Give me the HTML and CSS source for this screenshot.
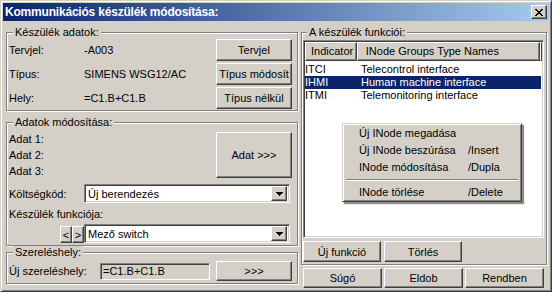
FILE: index.html
```html
<!DOCTYPE html>
<html lang="hu">
<head>
  <meta charset="UTF-8" />
  <title>Kommunikációs készülék módosítása</title>
  <link rel="stylesheet" href="styles.css">
</head>
<body>
  <div class="window">
    <!-- title bar -->
    <div class="titlebar">
      <span class="title">Kommunikációs készülék módosítása:</span>
      <button class="btn close" aria-label="Bezár">
        <svg width="8" height="7" viewBox="0 0 8 7"><path d="M0 0h2v1h-2zM6 0h2v1h-2zM1 1h2v1h-2zM5 1h2v1h-2zM2 2h4v1h-4zM3 3h2v1h-2zM2 4h4v1h-4zM1 5h2v1h-2zM5 5h2v1h-2zM0 6h2v1h-2zM6 6h2v1h-2z" fill="#000"/></svg>
      </button>
    </div>

    <div class="content">
      <!-- left side -->
      <div class="left">
        <fieldset class="group g-device">
          <legend>Készülék adatok:</legend>
          <div class="device-grid">
            <span>Tervjel:</span><span class="val">-A003</span><button class="btn">Tervjel</button>
            <span>Típus:</span><span class="val">SIMENS WSG12/AC</span><button class="btn">Típus módosít</button>
            <span>Hely:</span><span class="val">=C1.B+C1.B</span><button class="btn">Típus nélkül</button>
          </div>
        </fieldset>

        <fieldset class="group g-data">
          <legend>Adatok módosítása:</legend>
          <div class="data-top">
            <div class="adat-list">
              <div>Adat 1:</div>
              <div>Adat 2:</div>
              <div>Adat 3:</div>
            </div>
            <button class="btn btn-adat">Adat &gt;&gt;&gt;</button>
          </div>
          <div class="cost-row">
            <span>Költségkód:</span>
            <div class="combo">
              <span class="combo-text">Új berendezés</span>
              <span class="btn drop"><svg width="7" height="4" viewBox="0 0 7 4"><path d="M0 0h7v1h-1v1h-1v1h-1v1h-1v-1h-1v-1h-1v-1h-1z" fill="#000"/></svg></span>
            </div>
          </div>
          <div class="func-label">Készülék funkciója:</div>
          <div class="func-row">
            <div class="arrows">
              <button class="btn arrow">&lt;</button>
              <button class="btn arrow">&gt;</button>
            </div>
            <div class="combo">
              <span class="combo-text">Mező switch</span>
              <span class="btn drop"><svg width="7" height="4" viewBox="0 0 7 4"><path d="M0 0h7v1h-1v1h-1v1h-1v1h-1v-1h-1v-1h-1v-1h-1z" fill="#000"/></svg></span>
            </div>
          </div>
        </fieldset>

        <fieldset class="group g-place">
          <legend>Szereléshely:</legend>
          <div class="place-row">
            <span>Új szereléshely:</span>
            <div class="field">=C1.B+C1.B</div>
            <button class="btn">&gt;&gt;&gt;</button>
          </div>
        </fieldset>
      </div>

      <!-- right side -->
      <div class="right">
        <fieldset class="group g-func">
          <legend>A készülék funkciói:</legend>
          <div class="listview">
            <div class="lv-head">
              <div class="hcell c1">Indicator</div>
              <div class="hcell c2">INode Groups Type Names</div>
              <div class="hcell rest"></div>
            </div>
            <div class="lv-row"><span class="c1">ITCI</span><span class="c2">Telecontrol interface</span></div>
            <div class="lv-row selected"><span class="c1">IHMI</span><span class="c2">Human machine interface</span></div>
            <div class="lv-row"><span class="c1">ITMI</span><span class="c2">Telemonitoring interface</span></div>
          </div>
          <div class="func-buttons">
            <button class="btn">Új funkció</button>
            <button class="btn">Törlés</button>
          </div>
        </fieldset>
        <div class="dialog-buttons">
          <button class="btn">Súgó</button>
          <button class="btn">Eldob</button>
          <button class="btn">Rendben</button>
        </div>
      </div>
    </div>

    <!-- popup menu over the list -->
    <div class="context-menu">
      <div class="menu-item"><span class="m-label">Új INode megadása</span><span></span></div>
      <div class="menu-item"><span class="m-label">Új INode beszúrása</span><span>/Insert</span></div>
      <div class="menu-item"><span class="m-label">INode módosítása</span><span>/Dupla</span></div>
      <div class="menu-sep"></div>
      <div class="menu-item"><span class="m-label">INode törlése</span><span>/Delete</span></div>
    </div>
  </div>
</body>
</html>
```

FILE: styles.css
```css
* {
  box-sizing: border-box;
}

html, body {
  margin: 0;
  padding: 0;
}

body {
  width: 552px;
  height: 292px;
  overflow: hidden;
  font: 11px 'Liberation Sans', Arial, sans-serif;
  color: #000;
  background: #d4d0c8;
}

.window {
  position: relative;
  width: 552px;
  height: 292px;
  padding: 2px;
  background: #d4d0c8;
  border: 1px solid;
  border-color: #d4d0c8 #404040 #404040 #d4d0c8;
  box-shadow: inset 1px 1px #fff, inset -1px -1px #808080;
}

/* title bar */
.titlebar {
  height: 18px;
  display: flex;
  align-items: center;
  justify-content: space-between;
  padding: 0 2px;
  background: linear-gradient(to right, #0a246a, #a6caf0);
}

.title {
  color: #fff;
  font-weight: bold;
  font-size: 12px;
  letter-spacing: -0.2px;
}

/* classic raised button */
.btn {
  font: inherit;
  color: #000;
  margin: 0;
  padding: 0;
  background: #d4d0c8;
  border: 1px solid;
  border-color: #fff #404040 #404040 #fff;
  box-shadow: inset -1px -1px #808080;
  display: flex;
  align-items: center;
  justify-content: center;
}

.close {
  width: 16px;
  height: 14px;
}

.content {
  display: grid;
  grid-template-columns: 292px 246px;
  column-gap: 3px;
  padding: 5px 2px 0 3px;
}

/* etched group boxes */
.group {
  margin: 0;
  padding: 0 5px 1px 2px;
  min-width: 0;
  border: 1px solid #808080;
  box-shadow: inset 1px 1px #fff, 1px 1px #fff;
}

.group legend {
  padding: 0 2px;
  margin-left: 4px;
  line-height: 13px;
  background: #d4d0c8;
}

.left {
  display: flex;
  flex-direction: column;
}

.device-grid {
  display: grid;
  grid-template-columns: 75px 1fr 76px;
  grid-auto-rows: 22px;
  row-gap: 2px;
  align-items: center;
}

.device-grid .btn {
  height: 22px;
}

.g-data {
  margin-top: 5px;
  padding-bottom: 2px;
}

.data-top {
  display: flex;
  justify-content: space-between;
  padding-top: 2px;
}

.adat-list div {
  line-height: 16px;
}

.btn-adat {
  width: 76px;
  height: 46px;
  margin-top: 1px;
}

.cost-row {
  margin-top: 5px;
  display: grid;
  grid-template-columns: 75px 1fr;
  align-items: center;
}

/* combo box */
.combo {
  height: 19px;
  display: flex;
  align-items: center;
  justify-content: space-between;
  background: #fff;
  border: 1px solid;
  border-color: #808080 #fff #fff #808080;
  box-shadow: inset 1px 1px #404040, inset -1px -1px #d4d0c8;
  padding: 2px 2px 2px 3px;
  margin-right: 2px;
}

.drop {
  width: 16px;
  height: 15px;
}

.func-label {
  margin-top: 3px;
  line-height: 16px;
}

.func-row {
  margin-top: 2px;
  display: grid;
  grid-template-columns: 75px 1fr;
}

.arrows {
  display: flex;
  justify-content: flex-end;
  align-items: flex-end;
}

.arrow {
  width: 12px;
  height: 17px;
}

.g-place {
  padding-bottom: 2px;
}

.place-row {
  margin-top: 2px;
  display: grid;
  grid-template-columns: 91px 110px 1fr;
  column-gap: 0;
  align-items: center;
  height: 20px;
}

.field {
  height: 17px;
  line-height: 13px;
  padding: 1px 2px;
  border: 1px solid;
  border-color: #808080 #fff #fff #808080;
  box-shadow: inset 1px 1px #404040;
}

.place-row .btn {
  width: 76px;
  height: 20px;
  justify-self: end;
}

/* right side */
.g-func {
  padding: 0 2px 2px 1px;
}

.listview {
  margin-top: 1px;
  height: 198px;
  padding: 1px;
  background: #fff;
  border: 1px solid;
  border-color: #808080 #fff #fff #808080;
  box-shadow: inset 1px 1px #404040, inset -1px -1px #d4d0c8;
}

.lv-head {
  display: flex;
  height: 19px;
  margin-bottom: 2px;
}

.hcell {
  background: #d4d0c8;
  border: 1px solid;
  border-color: #fff #404040 #404040 #fff;
  box-shadow: inset -1px -1px #808080;
  line-height: 16px;
  white-space: nowrap;
}

.hcell.c1 {
  width: 52px;
  padding-left: 5px;
}

.hcell.c2 {
  width: 184px;
  padding-left: 8px;
}

.hcell.rest {
  flex: 1;
}

.lv-row {
  display: flex;
  width: 236px;
  height: 13px;
  line-height: 13px;
  white-space: nowrap;
}

.lv-row .c1 {
  width: 52px;
}

.lv-row .c2 {
  padding-left: 4px;
}

.lv-row.selected {
  background: #0a246a;
  color: #fff;
}

.func-buttons {
  margin-top: 3px;
  display: flex;
  gap: 3px;
}

.func-buttons .btn {
  width: 78px;
  height: 21px;
}

.dialog-buttons {
  margin-top: 3px;
  padding-left: 2px;
  display: grid;
  grid-template-columns: 79px 79px 79px;
  column-gap: 2px;
}

.dialog-buttons .btn {
  height: 20px;
}

/* context menu */
.context-menu {
  position: absolute;
  left: 341px;
  top: 122px;
  width: 180px;
  padding: 1px 2px 0;
  background: #d4d0c8;
  border: 1px solid;
  border-color: #d4d0c8 #404040 #404040 #d4d0c8;
  box-shadow: inset 1px 1px #fff, inset -1px -1px #808080, 2px 2px 1px rgba(0, 0, 0, 0.45);
}

.menu-item {
  display: flex;
  height: 17px;
  line-height: 17px;
  padding-left: 14px;
}

.m-label {
  width: 109px;
}

.menu-sep {
  height: 8px;
  margin: 0 1px;
  background: linear-gradient(#d4d0c8 3px, #808080 3px, #808080 4px, #fff 4px, #fff 5px, #d4d0c8 5px);
}
```
